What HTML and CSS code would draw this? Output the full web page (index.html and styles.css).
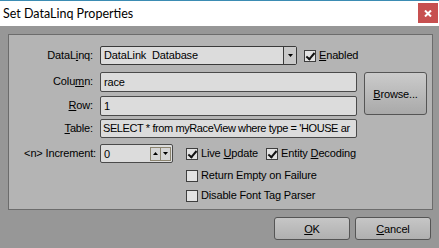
FILE: index.html
```html
<!DOCTYPE html>
<html>
<head>
<meta charset="utf-8">
<link rel="stylesheet" href="styles.css">
</head>
<body>
<div class="window">
  <div class="titlebar">
    <span class="title">Set DataLinq Properties</span>
    <span class="close"><svg width="8" height="7" viewBox="0 0 8 7"><path d="M1 0.5 L7 6.5 M7 0.5 L1 6.5" stroke="#fff" stroke-width="2"/></svg></span>
  </div>
  <div class="content">
    <div class="panel">
      <label class="lbl r1">DataL<u>i</u>nq:</label>
      <div class="r1 rowflex">
        <div class="combo"><span class="ctext">DataLink&nbsp; Database</span><span class="cbtn"><svg width="5" height="3" viewBox="0 0 5 3"><path d="M0 0 H5 L2.5 3 Z" fill="#000"/></svg></span></div>
        <span class="check on"></span><span class="ctl"><u>E</u>nabled</span>
      </div>

      <label class="lbl r2">Colu<u>m</u>n:</label>
      <div class="field r2">race</div>
      <button class="btn browse"><u>B</u>rowse...</button>

      <label class="lbl r3"><u>R</u>ow:</label>
      <div class="field r3">1</div>

      <label class="lbl r4"><u>T</u>able:</label>
      <div class="field r4 query">SELECT * from myRaceView where type = 'HOUSE ar</div>

      <label class="lbl r5 inc">&lt;n&gt; Increment:</label>
      <div class="r5 rowflex">
        <div class="spin"><span class="stext">0</span>
          <span class="sbtn"><svg width="5" height="3" viewBox="0 0 5 3"><path d="M0 3 H5 L2.5 0 Z" fill="#000"/></svg></span>
          <span class="sbtn"><svg width="5" height="3" viewBox="0 0 5 3"><path d="M0 0 H5 L2.5 3 Z" fill="#000"/></svg></span>
        </div>
        <span class="check on first"></span><span class="ctl">Live <u>U</u>pdate</span>
        <span class="check on second"></span><span class="ctl">Entity <u>D</u>ecoding</span>
      </div>

      <div class="r6 rowflex indent"><span class="check"></span><span class="ctl">Return Empty on Failure</span></div>
      <div class="r7 rowflex indent"><span class="check"></span><span class="ctl">Disable Font Tag Parser</span></div>
    </div>
    <div class="actions">
      <button class="btn"><u>O</u>K</button>
      <button class="btn"><u>C</u>ancel</button>
    </div>
  </div>
</div>
</body>
</html>
```
FILE: styles.css
```css
html, body { margin: 0; padding: 0; }
body {
  width: 439px; height: 248px; overflow: hidden;
  background: #979797;
  font-family: "Liberation Sans", Arial, sans-serif;
  font-size: 11px; color: #000; letter-spacing: -0.15px;
}
.window { width: 439px; height: 248px; display: flex; flex-direction: column; }
.titlebar {
  height: 25px; border-top: 1px solid #3b8cb3; background: #fff;
  display: flex; align-items: flex-start; padding: 0 1px 0 3px;
}
.title {
  font-family: Lato, "Noto Sans", sans-serif; font-size: 12.5px; letter-spacing: 0;
  line-height: 13px; margin-top: 6px; color: #000;
}
.close {
  margin-left: auto; margin-top: 2px; width: 20px; height: 20px;
  background: #c75050; display: flex; align-items: center; justify-content: center;
}
.content { flex: 1; background: #979797; padding: 8px 8px 0 8px; }
.panel {
  border: 1px solid #6c6c6c; background: #b4b4b4;
  box-sizing: border-box; width: 425px; height: 176px;
  padding: 11px 0 0 0;
  display: grid;
  grid-template-columns: 84px 257px 63px;
  column-gap: 7px;
  grid-template-rows: 26px 24px 23px 25px 21px 21px 19px;
}
.r1 { grid-row: 1; } .r2 { grid-row: 2; } .r3 { grid-row: 3; }
.r4 { grid-row: 4; } .r5 { grid-row: 5; } .r6 { grid-row: 6; } .r7 { grid-row: 7; }
.lbl {
  grid-column: 1; text-align: right; height: 19px; line-height: 19px;
  white-space: nowrap;
}
.lbl.inc { margin-right: -3px; }
.rowflex { grid-column: 2 / 4; display: flex; align-items: center; height: 19px; white-space: nowrap; }
.r6, .r7 { align-self: center; }
.indent { padding-left: 86px; }
.field {
  grid-column: 2; box-sizing: border-box; height: 20px;
  border: 1px solid #4a4a4a; border-radius: 2px; background: #dcdcdc;
  padding: 0 3px; line-height: 18px; white-space: nowrap; overflow: hidden;
}
.field.r4 { height: 19px; line-height: 17px; }
.field.query { padding: 0 0 0 2px; letter-spacing: -0.4px; }
.combo {
  box-sizing: border-box; width: 197px; height: 19px; display: flex;
  border: 1px solid #3a3a3a; border-radius: 2px; background: #dcdcdc;
}
.ctext { flex: 1; padding-left: 3px; line-height: 17px; }
.cbtn {
  width: 12px; border-left: 1px solid #3a3a3a; background: #c9c9c9;
  display: flex; align-items: center; justify-content: center;
}
.combo + .check { margin-left: 7px; }
.check {
  box-sizing: border-box; width: 12px; height: 12px; flex: none;
  border: 1px solid #3e3e3e; background: #e2e2e2; position: relative;
}
.check.on::after {
  content: ""; position: absolute; left: 3px; top: 0px; width: 3px; height: 7px;
  border: solid #111; border-width: 0 2px 2px 0; transform: rotate(40deg);
}
.ctl { margin-left: 3px; line-height: 19px; }
.spin {
  box-sizing: border-box; width: 73px; height: 19px; display: flex; align-items: center;
  border: 1px solid #4a4a4a; border-radius: 2px; background: #dcdcdc; padding-right: 1px;
}
.stext { flex: 1; padding-left: 3px; }
.sbtn {
  box-sizing: border-box; width: 11px; height: 14px; border: 1px solid #8c8570;
  background: #d6d6d6; display: flex; align-items: center; justify-content: center;
}
.sbtn + .sbtn { border-left: none; width: 10px; }
.check.first { margin-left: 13px; }
.check.second { margin-left: 8px; }
.btn {
  box-sizing: border-box; font-family: inherit; font-size: 11px; color: #000;
  letter-spacing: -0.15px;
  border: 1px solid #555; border-radius: 3px;
  background: linear-gradient(#cbcbcb, #a9a9a9);
  padding: 0; margin: 0;
}
.browse { grid-column: 3; grid-row: 2 / 4; height: 43px; align-self: start; }
.actions { display: flex; justify-content: flex-end; gap: 5px; margin-top: 7px; }
.actions .btn { width: 76px; height: 23px; background: linear-gradient(#c6c6c6, #b0b0b0); }
u { text-decoration: underline; text-underline-offset: 1px; }
```
